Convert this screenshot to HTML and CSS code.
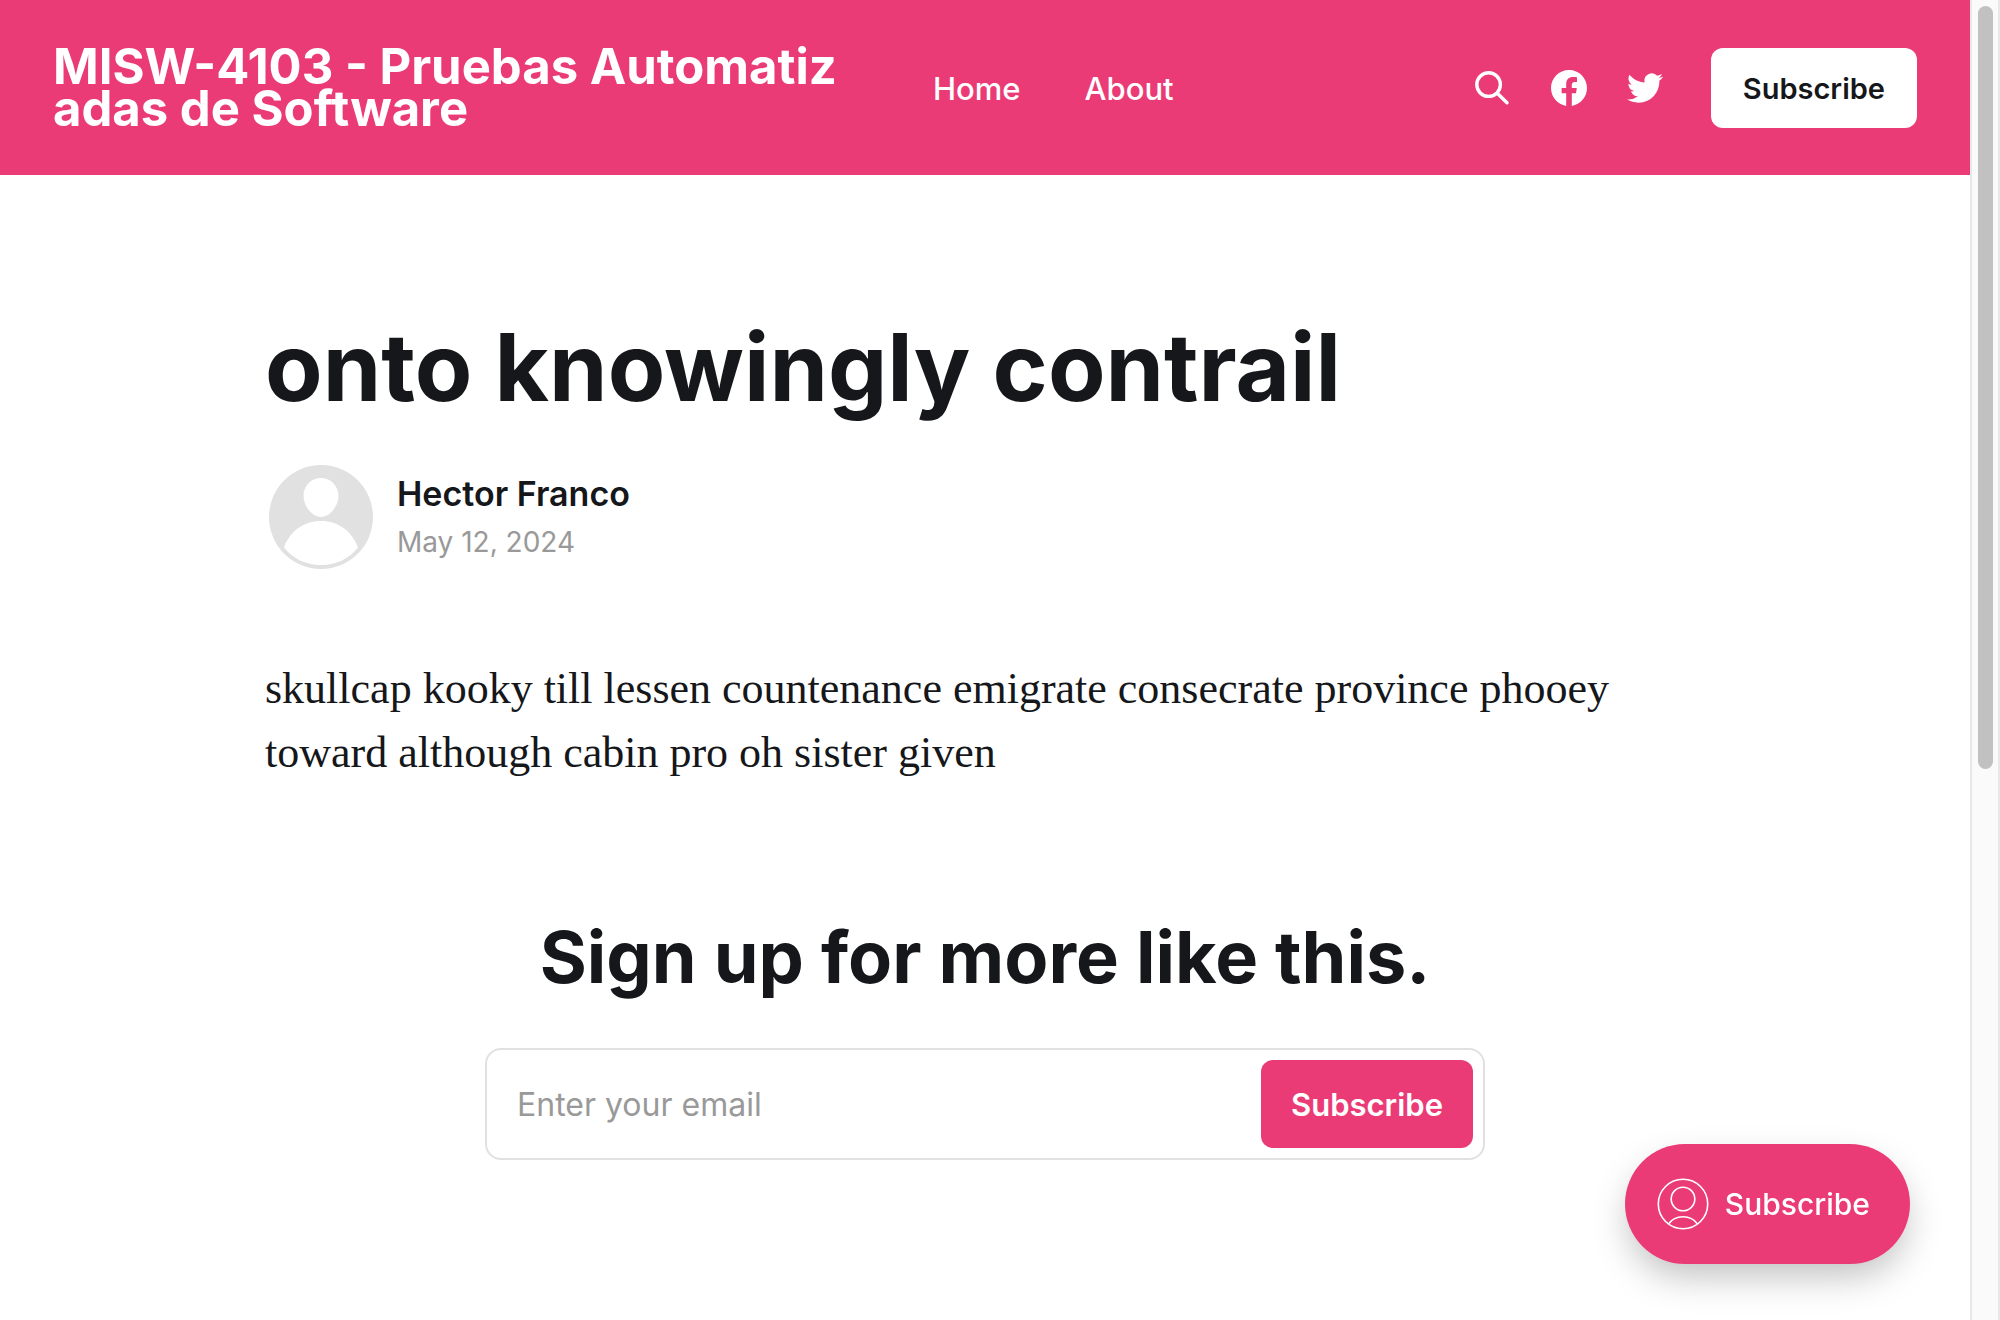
FILE: index.html
```html
<!DOCTYPE html>
<html lang="en">
<head>
<meta charset="utf-8">
<meta name="viewport" content="width=device-width, initial-scale=1">
<title>onto knowingly contrail</title>
<link rel="stylesheet" href="styles.css">
</head>
<body>
<div class="site">
  <header class="head">
    <a class="logo" href="#">MISW-4103 - Pruebas Automatizadas de Software</a>
    <nav class="nav">
      <a href="#">Home</a>
      <a href="#">About</a>
    </nav>
    <div class="actions">
      <button class="icon-button" type="button" aria-label="Search">
        <svg class="icon" viewBox="1 0 36 36" fill="none" stroke="currentColor" stroke-width="3.400" stroke-linecap="round"><circle cx="14.6" cy="14.6" r="11.800"/><path d="M23.300 23.300 33 32.800"/></svg>
      </button>
      <a class="icon-button" href="#" aria-label="Facebook">
        <svg class="icon" viewBox="0 0 24 24" fill="currentColor"><path d="M24 12.07C24 5.4 18.63 0 12 0S0 5.4 0 12.07C0 18.1 4.39 23.1 10.13 24v-8.44H7.08v-3.49h3.05V9.41c0-3.02 1.79-4.69 4.53-4.69 1.31 0 2.68.24 2.68.24v2.97h-1.51c-1.49 0-1.96.93-1.96 1.89v2.25h3.33l-.53 3.49h-2.8V24C19.61 23.1 24 18.1 24 12.07z"/></svg>
      </a>
      <a class="icon-button" href="#" aria-label="Twitter">
        <svg class="icon" viewBox="0 0 24 24" fill="currentColor"><path d="M23.95 4.57a10 10 0 0 1-2.82.77 4.96 4.96 0 0 0 2.16-2.72c-.95.56-2 .96-3.12 1.18a4.92 4.92 0 0 0-8.39 4.49C7.69 8.1 4.07 6.13 1.64 3.16a4.92 4.92 0 0 0 1.52 6.57 4.9 4.9 0 0 1-2.23-.61v.06a4.92 4.92 0 0 0 3.95 4.83 5 5 0 0 1-2.21.08 4.94 4.94 0 0 0 4.6 3.42A9.87 9.87 0 0 1 0 19.54a13.99 13.99 0 0 0 7.55 2.21c9.05 0 14-7.5 14-13.98 0-.21 0-.42-.02-.63a9.94 9.94 0 0 0 2.46-2.55z"/></svg>
      </a>
      <button class="button button-light" type="button">Subscribe</button>
    </div>
  </header>

  <main class="main">
    <article class="article">
      <h1 class="title">onto knowingly contrail</h1>
      <div class="byline">
        <svg class="avatar" viewBox="0 0 104 104" aria-hidden="true"><circle cx="52" cy="52" r="52" fill="#e1e1e1"/><path d="M52 13c10 0 17.500 8 17.500 18S61 52 52 52 34.500 41 34.500 31 42 13 52 13zM52 56c17 0 31 10 37 26.500-9 11-21 17.500-37 17.500S24 93.500 15 82.500C21 66 35 56 52 56z" fill="#fff"/></svg>
        <div class="byline-text">
          <a class="author" href="#">Hector Franco</a>
          <time class="date" datetime="2024-05-12">May 12, 2024</time>
        </div>
      </div>
      <p class="content">skullcap kooky till lessen countenance emigrate consecrate province phooey toward although cabin pro oh sister given</p>
    </article>

    <section class="signup">
      <h2 class="signup-title">Sign up for more like this.</h2>
      <form class="signup-form">
        <input class="email" type="email" placeholder="Enter your email" aria-label="Enter your email">
        <button class="button button-accent" type="button">Subscribe</button>
      </form>
    </section>
  </main>
</div>

<button class="portal" type="button">
  <svg class="portal-icon" viewBox="0 0 52 52" fill="none" stroke="currentColor" stroke-width="1.600" aria-hidden="true"><circle cx="26" cy="26" r="24.700"/><circle cx="26" cy="21" r="11.800"/><path d="M11.500 46C15 41 20 38.800 26 38.800S37 41 40.500 46"/></svg>
  Subscribe
</button>

<div class="scrollbar" aria-hidden="true"><div class="thumb"></div></div>
</body>
</html>
```
FILE: styles.css
```css
:root {
  --accent: #eb3b76;
  --ink: #15171a;
  --muted: #999;
  --line: #e1e1e1;
  --bar: 30px;
}

* {
  box-sizing: border-box;
}

body {
  margin: 0;
  padding-right: var(--bar);
  background: #fff;
  color: var(--ink);
  font-family: Inter, "Liberation Sans", sans-serif;
  font-size: 32px;
}

a {
  color: inherit;
  text-decoration: none;
}

button,
input {
  font: inherit;
}

h1,
h2,
p {
  margin: 0;
}

.head {
  display: grid;
  grid-template-columns: minmax(0, 800px) 1fr auto;
  column-gap: 80px;
  align-items: center;
  padding: 46px 53px 45px;
  background: var(--accent);
  color: #fff;
}

.logo {
  font-size: 49px;
  font-weight: 700;
  line-height: 42px;
  word-break: break-all;
}

.nav {
  display: flex;
  gap: 64px;
  font-size: 31px;
  font-weight: 500;
}

.actions {
  display: flex;
  align-items: center;
  gap: 40px;
}

.icon-button {
  display: flex;
  padding: 0;
  border: 0;
  background: none;
  color: #fff;
}

.icon {
  width: 36px;
  height: 36px;
}

.button {
  flex: none;
  border: 0;
  border-radius: 12px;
  font-weight: 600;
}

.button-light {
  height: 80px;
  margin-left: 8px;
  padding: 0 32px;
  background: #fff;
  color: var(--ink);
  font-size: 29px;
}

.button-accent {
  height: 88px;
  padding: 0 30px;
  background: var(--accent);
  color: #fff;
  font-size: 31px;
}

.main {
  padding: 136px 53px 160px;
}

.article {
  max-width: 1440px;
  margin: 0 auto;
}

.title {
  font-size: 94px;
  font-weight: 700;
  line-height: 112px;
}

.byline {
  display: flex;
  align-items: center;
  gap: 24px;
  margin-top: 42px;
  padding-left: 4px;
}

.byline-text {
  padding-top: 2px;
}

.avatar {
  width: 104px;
  height: 104px;
}

.author,
.date {
  display: block;
}

.author {
  font-size: 34px;
  font-weight: 600;
  line-height: 48px;
}

.date {
  color: var(--muted);
  font-size: 28px;
  line-height: 48px;
}

.content {
  margin-top: 88px;
  font-family: "Liberation Serif", serif;
  font-size: 44px;
  line-height: 64px;
}

.signup {
  max-width: 1000px;
  margin: 132px auto 0;
  text-align: center;
}

.signup-title {
  font-size: 72px;
  font-weight: 700;
  line-height: 80px;
  white-space: nowrap;
}

.signup-form {
  display: flex;
  align-items: center;
  margin-top: 51px;
  padding: 10px;
  border: 2px solid var(--line);
  border-radius: 16px;
}

.email {
  flex: 1;
  min-width: 0;
  padding: 0 20px;
  border: 0;
  outline: 0;
  background: none;
  color: var(--ink);
}

.email::placeholder {
  color: var(--muted);
}

.portal {
  position: fixed;
  right: 90px;
  bottom: 56px;
  display: flex;
  align-items: center;
  gap: 16px;
  height: 120px;
  padding: 0 40px 0 32px;
  border: 0;
  border-radius: 60px;
  background: var(--accent);
  color: #fff;
  font-size: 30px;
  font-weight: 500;
  box-shadow: 0 16px 36px -4px rgba(0, 0, 0, 0.25);
}

.portal-icon {
  width: 52px;
  height: 52px;
}

.scrollbar {
  position: fixed;
  top: 0;
  right: 0;
  bottom: 0;
  width: var(--bar);
  padding: 6px 5px 6px 6px;
  border: solid #e8e8e8;
  border-width: 0 2px;
  background: #fafafa;
}

.thumb {
  height: calc(100% * 7 / 12);
  border-radius: 8px;
  background: #c1c1c1;
}
```
